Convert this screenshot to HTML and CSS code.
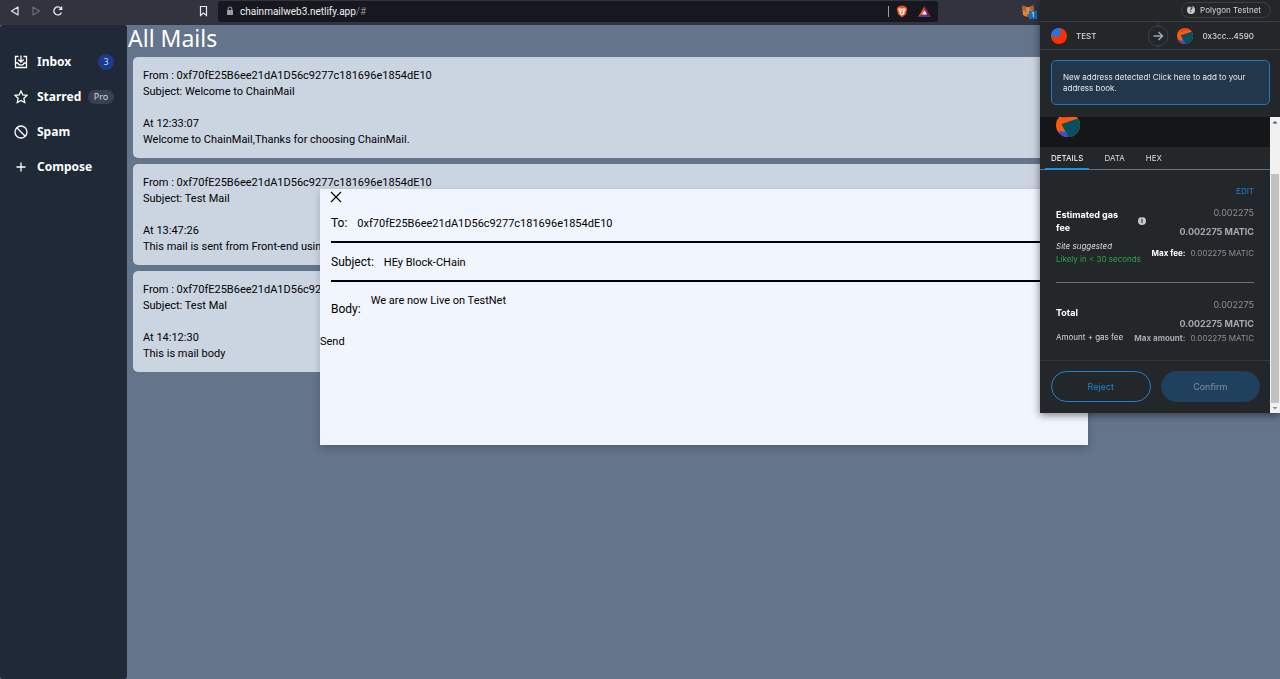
FILE: index.html
```
<!DOCTYPE html>
<html lang="en">
<head>
    <meta charset="UTF-8">
    <meta name="viewport" content="width=device-width, initial-scale=1.0">
    <title>ChainMail</title>
    <link rel="stylesheet" href="styles.css">
</head>
<body>
    <header class="toolbar">
        <button class="tool" aria-label="Back"><svg width="10" height="12" viewBox="0 0 10 12"><path d="M8 2v8L1.500 6z" fill="none" stroke="#e8e8ec" stroke-width="1.200" stroke-linejoin="round"/></svg></button>
        <button class="tool" aria-label="Forward"><svg width="10" height="12" viewBox="0 0 10 12"><path d="M2 2v8l6.500-4z" fill="none" stroke="#6a6b78" stroke-width="1.200" stroke-linejoin="round"/></svg></button>
        <button class="tool" aria-label="Reload"><svg width="12" height="12" viewBox="0 0 12 12"><path d="M9 3.500A4 4 0 1 0 9.500 7.500M9.700 1.500v2.800H6.800" fill="none" stroke="#e8e8ec" stroke-width="1.300"/></svg></button>
        <button class="tool bookmark" aria-label="Bookmark"><svg width="9" height="12" viewBox="0 0 9 12"><path d="M1.500 1.500h6v9L4.500 8l-3 2.500z" fill="none" stroke="#e8e8ec" stroke-width="1.200"/></svg></button>
        <div class="address">
            <svg width="8" height="10" viewBox="0 0 8 10"><path d="M2.200 4.500V2.800a1.800 1.800 0 0 1 3.600 0v1.700" fill="none" stroke="#9a9ba3" stroke-width="1.100"/><rect x="1" y="4" width="6" height="5" rx=".6" fill="#9a9ba3"/></svg>
            <span class="url">chainmailweb3.netlify.app<span>/#</span></span>
            <i class="bar"></i>
            <svg class="brave" width="12" height="13" viewBox="0 0 12 13"><path d="M3.500.8h5l1 1.200 1.200.3.500 2-1.200 5L6 12.500 2 9.300l-1.200-5 .5-2L2.500 2z" fill="#f0501f"/><path d="M3 3.200l3 .6 3-.6.800 1.600-1.600 2.500.3 1.500L6 10.500 3.500 8.800l.3-1.500-1.600-2.500z" fill="#fff"/><path d="M3.500 4.800l1.700.6M8.500 4.800l-1.700.6M6 5v2.500M4.800 8.300L6 7.600l1.200.7" stroke="#f0501f" stroke-width=".8"/></svg>
            <svg width="13" height="11" viewBox="0 0 13 11"><path d="M6.500 0L0 11l6.500-3.500z" fill="#ff4724"/><path d="M6.500 0L13 11 6.500 6z" fill="#9e1f63"/><path d="M0 11h13L6.500 7z" fill="#662d91"/><path d="M6.500 4.200L3.900 8.500h5.200z" fill="#fff"/></svg>
        </div>
        <button class="tool fox" aria-label="MetaMask">
            <svg width="12" height="12" viewBox="0 0 12 12"><path d="M.5.500l4 1.500h3l4-1.500v5.500l-.5 4-3 1.500H4L1 10 .5 6z" fill="#e2873a"/><path d="M.5.500l4 1.500L4 5 .8 6zM11.500.5l-4 1.500L8 5l3.200 1z" fill="#b5622e"/><path d="M3.500 5.500l-.7 1 1.700.5zM8.500 5.500l.7 1-1.700.5zM5 9.500h2v1H5z" fill="#233447"/></svg>
            <span class="count">1</span>
        </button>
    </header>

    <div class="app">
        <aside class="sidebar">
            <nav>
                <a href="#">
                    <svg viewBox="0 0 14 14"><path d="M4.500 1.500H1.500v11h11v-11h-3M1.500 8h2.300c.5 1.500 1.600 2.200 3.200 2.200S9.700 9.500 10.200 8h2.300M7 .5v6M4.300 4.500L7 7l2.700-2.500"/></svg>
                    <span>Inbox</span><em class="badge">3</em>
                </a>
                <a href="#">
                    <svg viewBox="0 0 14 14"><path d="M7 1l1.800 3.900 4.200.5-3.100 2.900.8 4.200L7 10.400l-3.700 2.100.8-4.200L1 5.400l4.200-.5z"/></svg>
                    <span>Starred</span><em class="badge pro">Pro</em>
                </a>
                <a href="#">
                    <svg viewBox="0 0 14 14"><circle cx="7" cy="7" r="6"/><path d="M2.800 2.800l8.400 8.400"/></svg>
                    <span>Spam</span>
                </a>
                <a href="#">
                    <svg viewBox="0 0 14 14"><path d="M7 2.500v9M2.500 7h9"/></svg>
                    <span>Compose</span>
                </a>
            </nav>
        </aside>

        <main class="mails">
            <h1>All Mails</h1>
            <article class="mail">
                <p>From : 0xf70fE25B6ee21dA1D56c9277c181696e1854dE10</p>
                <p>Subject: Welcome to ChainMail</p>
                <br>
                <p>At 12:33:07</p>
                <p>Welcome to ChainMail,Thanks for choosing ChainMail.</p>
            </article>
            <article class="mail">
                <p>From : 0xf70fE25B6ee21dA1D56c9277c181696e1854dE10</p>
                <p>Subject: Test Mail</p>
                <br>
                <p>At 13:47:26</p>
                <p>This mail is sent from Front-end using</p>
            </article>
            <article class="mail">
                <p>From : 0xf70fE25B6ee21dA1D56c9277c181696e1854dE10</p>
                <p>Subject: Test Mal</p>
                <br>
                <p>At 14:12:30</p>
                <p>This is mail body</p>
            </article>
        </main>

        <form class="compose">
            <button type="button" class="close" aria-label="Close"><svg width="12" height="12" viewBox="0 0 12 12"><path d="M1 1l10 10M11 1L1 11" stroke="#000" stroke-width="1.200"/></svg></button>
            <div class="field">
                <label for="to">To:</label>
                <input id="to" type="text" value="0xf70fE25B6ee21dA1D56c9277c181696e1854dE10">
            </div>
            <div class="field">
                <label for="subject">Subject:</label>
                <input id="subject" type="text" value="HEy Block-CHain">
            </div>
            <div class="field body">
                <label for="body">Body:</label>
                <textarea id="body" rows="2">We are now Live on TestNet</textarea>
            </div>
            <button type="button" class="send">Send</button>
        </form>
    </div>

    <section class="wallet">
        <div class="network">
            <button><i>?</i>Polygon Testnet</button>
        </div>
        <div class="accounts">
            <div class="account">
                <svg width="16" height="16" viewBox="0 0 16 16"><circle cx="8" cy="8" r="8" fill="#fb3005"/><path d="M9.500 0A8 8 0 0 0 0 8l8.500 1L10 .3z" fill="#2375e1"/></svg>
                <span>TEST</span>
            </div>
            <svg class="arrow" width="22" height="28" viewBox="0 0 22 28"><path d="M11 0v4M11 24v4" stroke="#3b4046"/><circle cx="11" cy="14" r="10" fill="#24272a" stroke="#3b4046"/><path d="M6.500 14h9M11.500 10l4 4-4 4" fill="none" stroke="#9fa6ae" stroke-width="1.500"/></svg>
            <div class="account">
                <svg width="16" height="16" viewBox="0 0 24 24"><use href="#jazz"/></svg>
                <span>0x3cc...4590</span>
            </div>
        </div>
        <div class="notice">
            <button>New address detected! Click here to add to your address book.</button>
        </div>
        <div class="pane">
            <div class="content">
                <div class="summary">
                    <svg width="24" height="24" viewBox="0 0 24 24"><g id="jazz"><circle cx="12" cy="12" r="12" fill="#fc5c0a"/><path d="M5.500 11L22 5.500A12 12 0 0 1 12 24z" fill="#06505f"/><path d="M3.500 17.500l8 2.500v4a12 12 0 0 1-8-3.600z" fill="#2f55d4"/><path d="M5 2.300A12 12 0 0 1 20 3L5 6z" fill="#d8204a" opacity=".4"/></g></svg>
                </div>
                <div class="tabs">
                    <button class="active">DETAILS</button>
                    <button>DATA</button>
                    <button>HEX</button>
                </div>
                <div class="details">
                    <a class="edit" href="#">EDIT</a>
                    <div class="row gas">
                        <div class="left">
                            <div class="title"><strong>Estimated gas fee</strong><i>i</i></div>
                            <em>Site suggested</em>
                            <span class="likely">Likely in &lt; 30 seconds</span>
                        </div>
                        <div class="right">
                            <span class="fiat">0.002275</span>
                            <b>0.002275 MATIC</b>
                            <small><strong>Max fee:</strong>0.002275 MATIC</small>
                        </div>
                    </div>
                    <div class="row total">
                        <div class="left">
                            <strong>Total</strong>
                            <span>Amount + gas fee</span>
                        </div>
                        <div class="right">
                            <span class="fiat">0.002275</span>
                            <b>0.002275 MATIC</b>
                            <small><strong>Max amount:</strong>0.002275 MATIC</small>
                        </div>
                    </div>
                </div>
                <div class="actions">
                    <button class="reject">Reject</button>
                    <button class="confirm" disabled>Confirm</button>
                </div>
            </div>
            <div class="scrollbar">
                <svg width="10" height="10" viewBox="0 0 10 10"><path d="M2.500 6.500L5 4l2.500 2.500z" fill="#505050"/></svg>
                <i></i>
                <svg width="10" height="10" viewBox="0 0 10 10"><path d="M2.500 4L5 6.500 7.500 4z" fill="#909090"/></svg>
            </div>
        </div>
    </section>
</body>
</html>
```
FILE: styles.css
```
* {
    box-sizing: border-box;
}

body {
    display: flex;
    flex-direction: column;
    min-height: 100vh;
    margin: 0;
    font-family: "Noto Sans", "Open Sans", sans-serif;
    font-size: 11px;
    color: #000;
    background: #64748b;
}

button {
    padding: 0;
    border: 0;
    background: none;
    font: inherit;
    color: inherit;
}

a {
    color: inherit;
    text-decoration: none;
}

svg {
    display: block;
    flex: none;
}

/* Browser bar */
.toolbar {
    display: flex;
    align-items: center;
    height: 25px;
    padding: 0 240px 3px 10px;
    gap: 11px;
    background: #33333f;
}

.tool {
    position: relative;
}

.bookmark {
    margin-left: 124px;
}

.address {
    display: flex;
    align-items: center;
    flex: 1;
    height: 21px;
    margin: 0 73px 0 -1px;
    padding: 0 7px 0 8px;
    border-radius: 3px;
    background: #17181f;
    color: #f0f0f2;
    font-size: 10px;
}

.url {
    flex: 1;
    margin-left: 6px;
    font-family: Roboto, sans-serif;
}

.url span {
    color: #85868f;
}

.bar {
    width: 1px;
    height: 11px;
    background: #9a9ba3;
}

.brave {
    margin: 0 10px 0 7px;
}

.fox {
    margin-right: 6px;
}

.count {
    position: absolute;
    left: 7px;
    top: 6px;
    width: 8px;
    height: 8px;
    background: #1170b8;
    color: #fff;
    font-size: 7px;
    line-height: 8px;
}

/* Mail app */
.app {
    position: relative;
    display: flex;
    flex: 1;
}

.sidebar {
    width: 127px;
    padding: 24px 13px 0 14px;
    border-radius: 3px;
    background: #1f2937;
    color: #fff;
}

.sidebar a {
    display: flex;
    align-items: center;
    height: 25px;
    margin-bottom: 10px;
    font-size: 12px;
    font-weight: bold;
}

.sidebar svg {
    width: 14px;
    height: 14px;
    margin-right: 9px;
    fill: none;
    stroke: #fff;
    stroke-width: 1.3px;
}

.badge {
    width: 16px;
    height: 16px;
    margin-left: auto;
    border-radius: 8px;
    background: #1e3a8a;
    color: #bfdbfe;
    font-size: 9px;
    font-style: normal;
    font-weight: normal;
    line-height: 16px;
    text-align: center;
}

.badge.pro {
    width: 26px;
    height: 14px;
    background: #374151;
    color: #d1d5db;
    line-height: 14px;
}

.mails {
    flex: 1;
}

.mails h1 {
    margin: 0 0 5px 1px;
    color: #fff;
    font-size: 23px;
    font-weight: normal;
    line-height: 27px;
}

.mail {
    height: 101px;
    margin: 0 6px 6px;
    padding: 11px 10px 10px;
    border-radius: 5px;
    background: #cbd5e1;
    font-family: Roboto, sans-serif;
    line-height: 16px;
}

.mail p {
    margin: 0;
}

.compose {
    position: absolute;
    left: 25%;
    top: 25%;
    width: 60%;
    min-height: 256px;
    background: #f1f5fd;
    box-shadow: 0 3px 8px rgba(0, 0, 0, 0.2);
    font-family: Roboto, sans-serif;
}

.close {
    display: block;
    margin: 2px 0 3px 10px;
}

.field {
    display: flex;
    align-items: center;
    gap: 10px;
    height: 37px;
    margin: 0 11px 2px;
    border-bottom: 2px solid #000;
    font-size: 12px;
}

.field input,
.field textarea {
    flex: 1;
    padding: 0;
    border: 0;
    outline: 0;
    background: none;
    font: inherit;
    font-size: 11px;
    resize: none;
}

.field textarea {
    line-height: 16px;
}

.field.body {
    height: 50px;
    margin-bottom: 0;
    border: 0;
}

.send {
    display: block;
    line-height: 16px;
}

/* Wallet popup */
.wallet {
    position: fixed;
    top: 0;
    right: 0;
    width: 240px;
    background: #24272a;
    box-shadow: 0 2px 8px rgba(0, 0, 0, 0.5);
    color: #d6d9dc;
    font-family: Inter, sans-serif;
    font-size: 8px;
}

.network {
    display: flex;
    justify-content: flex-end;
    height: 22px;
    padding: 2px 9px 3px;
    border-bottom: 1px solid #3b4046;
}

.network button {
    display: flex;
    align-items: center;
    gap: 5px;
    padding: 0 9px 0 5px;
    border: 1px solid #3b4046;
    border-radius: 9px;
}

.network i,
.title i {
    width: 8px;
    height: 8px;
    border-radius: 50%;
    background: #c5c8cb;
    color: #24272a;
    font-size: 7px;
    font-style: normal;
    font-weight: bold;
    line-height: 8px;
    text-align: center;
}

.accounts {
    display: flex;
    justify-content: space-between;
    height: 28px;
    padding: 0 26px 0 11px;
    border-bottom: 1px solid #3b4046;
}

.account {
    display: flex;
    align-items: center;
    gap: 9px;
    font-weight: 500;
}

.account:first-child {
    width: 88px;
}

.notice {
    padding: 10px 10px 12px 11px;
}

.notice button {
    width: 100%;
    height: 45px;
    padding: 0 11px;
    border: 1px solid #1f78b8;
    border-radius: 5px;
    background: #22374a;
    color: #e8ebee;
    line-height: 11px;
    text-align: left;
}

.pane {
    display: flex;
}

.content {
    flex: 1;
}

.summary {
    display: flex;
    align-items: flex-end;
    height: 30px;
    padding: 0 16px 10px;
    overflow: hidden;
    background: #141618;
}

.tabs {
    display: flex;
    gap: 9px;
    height: 23px;
    padding-left: 5px;
    border-bottom: 1px solid #6a7076;
}

.tabs button {
    height: 23px;
    padding: 0 6px;
    border-bottom: 2px solid transparent;
}

.tabs .active {
    border-color: #1f8fe0;
    color: #fff;
}

.details {
    padding: 15px 16px 0;
}

.edit {
    display: block;
    color: #1f7fd0;
    line-height: 12px;
    text-align: right;
}

.row {
    display: flex;
    justify-content: space-between;
}

.left,
.right {
    display: flex;
    flex-direction: column;
    white-space: nowrap;
}

.left > strong,
.title {
    color: #fff;
    font-size: 9px;
    line-height: 13px;
}

.gas {
    height: 86px;
    padding-top: 9px;
    border-bottom: 1px solid #6a7076;
}

.gas .left {
    width: 90px;
    padding-top: 2px;
    line-height: 13px;
}

.title {
    display: flex;
    align-items: center;
    justify-content: space-between;
    margin-bottom: 6px;
    white-space: normal;
}

.title strong {
    width: 70px;
}

.likely {
    color: #28a745;
}

.right {
    align-items: flex-end;
    color: #8b9096;
}

.fiat {
    font-size: 9px;
    line-height: 14px;
}

.right b {
    color: #a5aab0;
    font-size: 9px;
    line-height: 23px;
}

.right small {
    font-size: 8px;
    line-height: 20px;
}

.right small strong {
    margin-right: 5px;
    color: #fff;
}

.total {
    height: 77px;
    padding-top: 15px;
}

.total .left {
    padding-top: 8px;
}

.total .left span {
    line-height: 37px;
}

.total .right small {
    line-height: 7px;
}

.total .right small strong {
    color: #a5aab0;
}

.actions {
    display: flex;
    gap: 10px;
    padding: 10px 10px 11px 11px;
    border-top: 1px solid #33373c;
    font-size: 9px;
}

.actions button {
    flex: 1;
    height: 31px;
    border: 1px solid #1f82d2;
    border-radius: 16px;
    color: #1f82d2;
}

.actions .confirm {
    border-color: #1f415e;
    background: #1f415e;
    color: #7d909f;
}

.scrollbar {
    display: flex;
    flex-direction: column;
    align-items: center;
    width: 10px;
    background: #f1f1f1;
}

.scrollbar i {
    flex: 1;
    width: 8px;
    margin-top: 47px;
    background: #c1c1c1;
}
```
